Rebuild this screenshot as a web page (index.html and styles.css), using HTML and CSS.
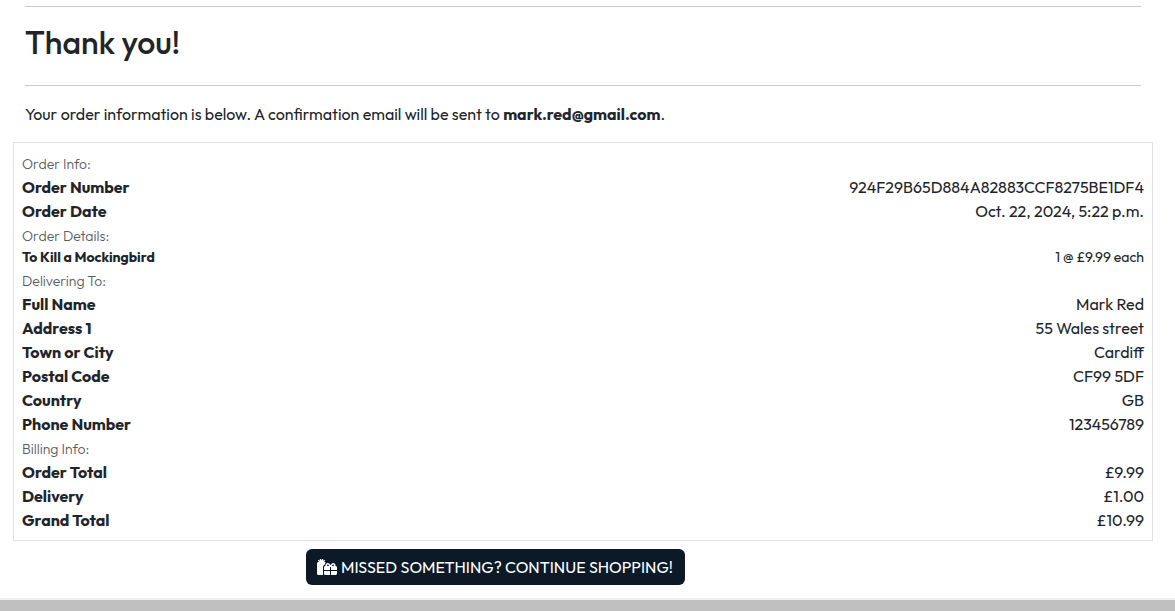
FILE: index.html
```html
<!DOCTYPE html>
<html lang="en">
<head>
<meta charset="utf-8">
<title>Thank you!</title>
<link rel="stylesheet" href="styles.css">
</head>
<body>
<main class="page">
  <header class="intro">
    <h1 class="title">Thank you!</h1>
    <p class="lead">Your order information is below. A confirmation email will be sent to <strong>mark.red@gmail.com</strong>.</p>
  </header>
  <section class="order">
    <h2 class="group">Order Info:</h2>
    <dl class="rows">
      <div class="row"><dt>Order Number</dt><dd>924F29B65D884A82883CCF8275BE1DF4</dd></div>
      <div class="row"><dt>Order Date</dt><dd>Oct. 22, 2024, 5:22 p.m.</dd></div>
    </dl>
    <h2 class="group">Order Details:</h2>
    <dl class="rows">
      <div class="row row-small"><dt>To Kill a Mockingbird</dt><dd>1 @ £9.99 each</dd></div>
    </dl>
    <h2 class="group">Delivering To:</h2>
    <dl class="rows">
      <div class="row"><dt>Full Name</dt><dd>Mark Red</dd></div>
      <div class="row"><dt>Address 1</dt><dd>55 Wales street</dd></div>
      <div class="row"><dt>Town or City</dt><dd>Cardiff</dd></div>
      <div class="row"><dt>Postal Code</dt><dd>CF99 5DF</dd></div>
      <div class="row"><dt>Country</dt><dd>GB</dd></div>
      <div class="row"><dt>Phone Number</dt><dd>123456789</dd></div>
    </dl>
    <h2 class="group">Billing Info:</h2>
    <dl class="rows">
      <div class="row"><dt>Order Total</dt><dd>£9.99</dd></div>
      <div class="row"><dt>Delivery</dt><dd>£1.00</dd></div>
      <div class="row"><dt>Grand Total</dt><dd>£10.99</dd></div>
    </dl>
  </section>
  <div class="actions">
    <a class="button" href="#">
      <svg class="icon" viewBox="0 0 640 512" aria-hidden="true"><path fill="currentColor" d="M200.6 32C205 19.5 198.5 5.8 186 1.4S159.8 3.5 155.4 16L144.7 46.2l-9.9-29.8C130.6 3.8 117-3 104.4 1.2S85 19 89.2 31.6l8.3 25-27.4-20c-10.7-7.8-25.7-5.4-33.5 5.3s-5.4 25.7 5.3 33.5L70.2 96H48C21.5 96 0 117.5 0 144V464c0 26.5 21.5 48 48 48H200.6c-5.4-9.4-8.6-20.3-8.6-32V256c0-29.9 20.5-55 48.2-62c1.8-31 17.1-58.2 40.1-76.1C271.7 104.7 256.9 96 240 96H217.8l28.3-20.6c10.7-7.8 13.1-22.8 5.3-33.5s-22.8-13.1-33.5-5.3L192.5 55.1 200.6 32zM363.5 185.5L393.1 224H344c-13.3 0-24-10.7-24-24c0-13.1 10.8-24 24.2-24c7.6 0 14.7 3.5 19.3 9.5zM272 200c0 8.4 1.4 16.5 4.1 24H272c-26.5 0-48 21.5-48 48v80H416V256h32v96H640V272c0-26.5-21.5-48-48-48h-4.1c2.7-7.5 4.1-15.6 4.1-24c0-39.9-32.5-72-72.2-72c-22.4 0-43.6 10.4-57.3 28.2L432 195.8l-30.5-39.6c-13.7-17.8-35-28.2-57.3-28.2c-39.7 0-72.2 32.1-72.2 72zM224 464c0 26.5 21.5 48 48 48H416V384H224v80zm224 48H592c26.5 0 48-21.5 48-48V384H448V512zm96-312c0 13.3-10.7 24-24 24H470.9l29.6-38.5c4.6-5.9 11.7-9.5 19.3-9.5c13.4 0 24.2 10.9 24.2 24z"/></svg>
      <span>MISSED SOMETHING? CONTINUE SHOPPING!</span>
    </a>
  </div>
</main>
<footer class="footer"></footer>
</body>
</html>
```
FILE: styles.css
```css
* { box-sizing: border-box; }
body {
  margin: 0;
  background: #fff;
  color: #212529;
  font: 16px/24px Outfit, Lato, sans-serif;
}
.page { padding: 6px 22px 13px 13px; }
.intro { padding: 0 12px; }
.title {
  margin: 0 0 16px;
  padding: 16px 0 23px;
  border-top: 1px solid #c8c9ca;
  border-bottom: 1px solid #c8c9ca;
  font-size: 32px;
  line-height: 39px;
  font-weight: 500;
}
.lead { margin: 0 0 16px; }
.order { padding: 8px; border: 1px solid #dee2e6; }
.group {
  margin: 0;
  padding-top: 2px;
  font-size: 14px;
  line-height: 22px;
  font-weight: 300;
  color: #585b5e;
}
.rows { margin: 0; }
.row { display: flex; justify-content: space-between; }
.row dt { font-weight: 700; }
.row dd { margin: 0; }
.row-small { font-size: 14px; line-height: 21px; }
.actions { display: flex; justify-content: center; padding: 8px 175px 0 0; }
.button {
  display: flex;
  align-items: center;
  gap: 4px;
  padding: 6px 12px 6px 11px;
  border-radius: 6px;
  background: #0c1927;
  color: #fff;
  text-decoration: none;
}
.icon { width: 20px; height: 16px; }
.footer { height: 13px; border-top: 2px solid #efefef; background: #c0c0c0; }
```
